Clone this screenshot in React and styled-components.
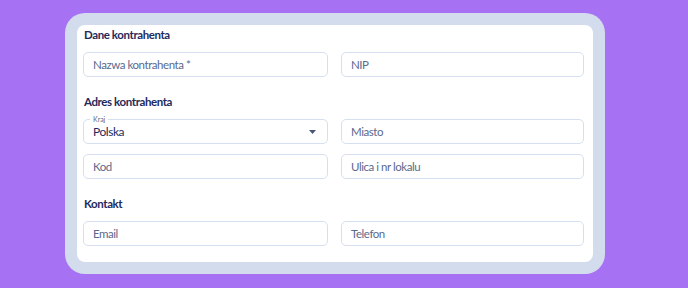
import styled, { createGlobalStyle } from "styled-components";

const GlobalStyle = createGlobalStyle`
  html, body {
    margin: 0;
    padding: 0;
    background: #a672f3;
    font-family: Lato, "Liberation Sans", sans-serif;
  }
`;

const Page = styled.div`
  width: 688px;
  height: 288px;
  padding: 13px 0 0 65px;
  box-sizing: border-box;
`;

const Frame = styled.div`
  width: 540px;
  height: 261px;
  box-sizing: border-box;
  padding: 12px;
  background: #d3dcec;
  border-radius: 20px;
`;

const Card = styled.div`
  height: 100%;
  box-sizing: border-box;
  background: #ffffff;
  border-radius: 8px;
  padding: 2px 8px 15px 6px;
  display: flex;
  flex-direction: column;
  gap: 17px;
`;

const Section = styled.div`
  display: flex;
  flex-direction: column;
  gap: 9px;
`;

const Title = styled.div`
  font-size: 11.5px;
  line-height: 16px;
  font-weight: 700;
  color: #1f2a5c;
  padding-left: 1px;
  letter-spacing: -0.4px;
`;

const Grid = styled.div`
  display: grid;
  grid-template-columns: 245px 243px;
  column-gap: 13px;
  row-gap: 10px;
`;

const Field = styled.div`
  position: relative;
  height: 25px;
  box-sizing: border-box;
  border: 1px solid #d6dff0;
  border-radius: 5px;
  display: flex;
  align-items: center;
  padding: 0 11px 0 9px;
  font-size: ${(p) => (p.$filled ? "12px" : "11.5px")};
  letter-spacing: -0.45px;
  color: ${(p) => (p.$filled ? "#1f2a5c" : "#5a6a8e")};
`;

const Legend = styled.span`
  position: absolute;
  top: -5px;
  left: 6px;
  padding: 0 3px;
  background: #ffffff;
  font-size: 7px;
  line-height: 9px;
  letter-spacing: 0;
  color: #5a6a8e;
`;

const Value = styled.span`
  flex: 1;
`;

const Caret = styled.svg`
  width: 7px;
  height: 4px;
`;

const Input = ({ label, value, select }) => (
  <Field $filled={!!value}>
    {select && <Legend>{select}</Legend>}
    <Value>{value || label}</Value>
    {select && (
      <Caret viewBox="0 0 7 4">
        <path d="M0 0 L7 0 L3.5 4 Z" fill="#475679" />
      </Caret>
    )}
  </Field>
);

const App = () => {
  return (
    <>
      <GlobalStyle />
      <Page>
        <Frame>
          <Card>
            <Section>
              <Title>Dane kontrahenta</Title>
              <Grid>
                <Input label="Nazwa kontrahenta *" />
                <Input label="NIP" />
              </Grid>
            </Section>
            <Section>
              <Title>Adres kontrahenta</Title>
              <Grid>
                <Input select="Kraj" value="Polska" />
                <Input label="Miasto" />
                <Input label="Kod" />
                <Input label="Ulica i nr lokalu" />
              </Grid>
            </Section>
            <Section>
              <Title>Kontakt</Title>
              <Grid>
                <Input label="Email" />
                <Input label="Telefon" />
              </Grid>
            </Section>
          </Card>
        </Frame>
      </Page>
    </>
  );
};

export default App;
